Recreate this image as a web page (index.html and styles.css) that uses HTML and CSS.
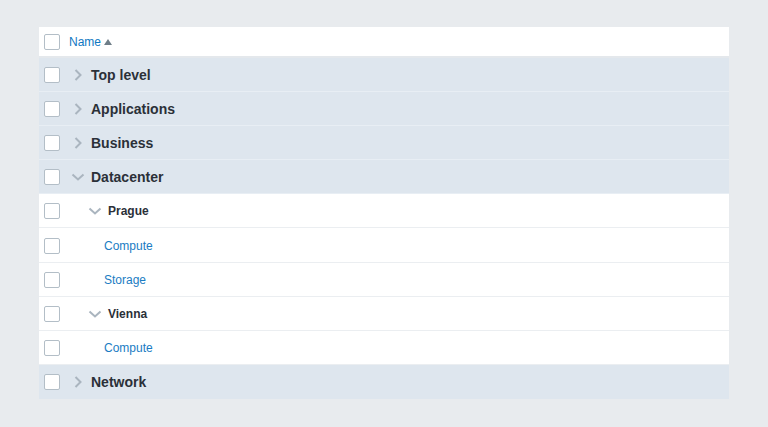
FILE: index.html
```html
<!DOCTYPE html>
<html lang="en">
<head>
    <meta charset="UTF-8">
    <title>Host groups</title>
    <link rel="stylesheet" href="styles.css">
</head>
<body>
    <div class="tree-table">
        <div class="tree-row header-row">
            <span class="check"></span>
            <a class="sort-link" href="#">Name <span class="sort-arrow"></span></a>
        </div>

        <div class="tree-row group-row">
            <span class="check"></span>
            <svg class="toggle" viewBox="0 0 14 14"><path d="M4.5 2 L9.5 7 L4.5 12"/></svg>
            <span class="group-name">Top level</span>
        </div>
        <div class="tree-row group-row">
            <span class="check"></span>
            <svg class="toggle" viewBox="0 0 14 14"><path d="M4.5 2 L9.5 7 L4.5 12"/></svg>
            <span class="group-name">Applications</span>
        </div>
        <div class="tree-row group-row">
            <span class="check"></span>
            <svg class="toggle" viewBox="0 0 14 14"><path d="M4.5 2 L9.5 7 L4.5 12"/></svg>
            <span class="group-name">Business</span>
        </div>
        <div class="tree-row group-row">
            <span class="check"></span>
            <svg class="toggle" viewBox="0 0 14 14"><path d="M1.5 4.5 L7 9.5 L12.5 4.5"/></svg>
            <span class="group-name">Datacenter</span>
        </div>

        <div class="tree-row sub-row">
            <span class="check"></span>
            <svg class="toggle" viewBox="0 0 14 14"><path d="M1.5 4.5 L7 9.5 L12.5 4.5"/></svg>
            <span class="sub-name">Prague</span>
        </div>
        <div class="tree-row leaf-row">
            <span class="check"></span>
            <a class="leaf-link" href="#">Compute</a>
        </div>
        <div class="tree-row leaf-row">
            <span class="check"></span>
            <a class="leaf-link" href="#">Storage</a>
        </div>
        <div class="tree-row sub-row">
            <span class="check"></span>
            <svg class="toggle" viewBox="0 0 14 14"><path d="M1.5 4.5 L7 9.5 L12.5 4.5"/></svg>
            <span class="sub-name">Vienna</span>
        </div>
        <div class="tree-row leaf-row">
            <span class="check"></span>
            <a class="leaf-link" href="#">Compute</a>
        </div>

        <div class="tree-row group-row last-row">
            <span class="check"></span>
            <svg class="toggle" viewBox="0 0 14 14"><path d="M4.5 2 L9.5 7 L4.5 12"/></svg>
            <span class="group-name">Network</span>
        </div>
    </div>
</body>
</html>
```

FILE: styles.css
```css
* {
    margin: 0;
    padding: 0;
    box-sizing: border-box;
    font-family: 'Liberation Sans', Arial, sans-serif;
}

body {
    background-color: #e8ebee;
    padding: 27px 39px;
}

.tree-table {
    width: 690px;
    background-color: #ffffff;
}

.tree-row {
    display: flex;
    align-items: center;
    height: 34.1px;
    padding-left: 5px;
    padding-top: 1px;
    border-bottom: 1px solid #ebeef1;
}

.header-row {
    height: 31px;
    padding-top: 0;
    border-bottom: 2px solid #e4e8ec;
}

.check {
    width: 16px;
    height: 16px;
    border: 1px solid #b3bec7;
    border-radius: 2px;
    background-color: #ffffff;
    flex-shrink: 0;
}

.sort-link {
    margin-left: 9px;
    color: #0f78c2;
    font-size: 12px;
    text-decoration: none;
    display: flex;
    align-items: center;
}

.sort-arrow {
    margin-left: 3px;
    width: 0;
    height: 0;
    border-left: 4px solid transparent;
    border-right: 4px solid transparent;
    border-bottom: 6px solid #6f7e88;
}

.toggle {
    width: 14px;
    height: 14px;
    fill: none;
    stroke: #aab5bf;
    stroke-width: 2;
    flex-shrink: 0;
}

.group-row {
    background-color: #dee6ee;
    border-bottom-color: #e8eef4;
}

.group-row .toggle {
    margin-left: 11px;
}

.group-name {
    margin-left: 6px;
    font-size: 14px;
    font-weight: bold;
    color: #2b3038;
}

.sub-row .toggle {
    margin-left: 28px;
}

.sub-name {
    margin-left: 6px;
    font-size: 12px;
    font-weight: bold;
    color: #2b3038;
}

.leaf-link {
    margin-left: 44px;
    font-size: 12px;
    color: #1a7cc3;
    text-decoration: none;
}

.last-row {
    border-bottom: none;
}
```
